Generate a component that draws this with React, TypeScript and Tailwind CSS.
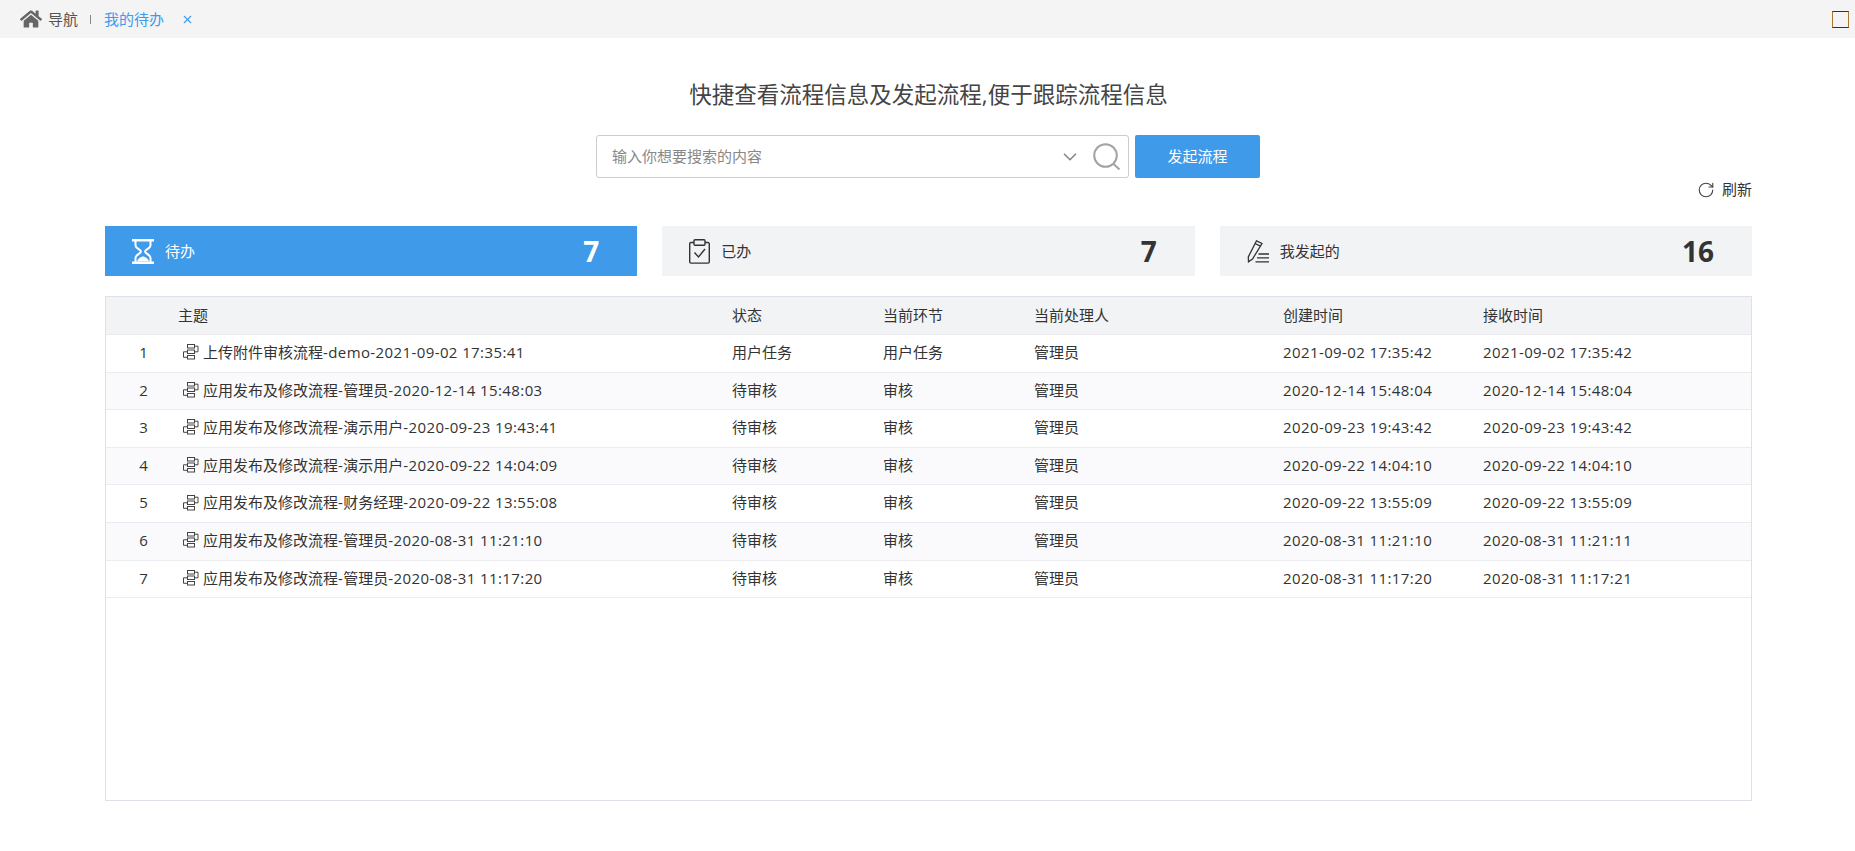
import { ChevronDown, RotateCw, X } from 'lucide-react'
import { FaHome } from 'react-icons/fa'

const rows = [
  ['上传附件审核流程-demo-2021-09-02 17:35:41', '用户任务', '用户任务', '管理员', '2021-09-02 17:35:42', '2021-09-02 17:35:42'],
  ['应用发布及修改流程-管理员-2020-12-14 15:48:03', '待审核', '审核', '管理员', '2020-12-14 15:48:04', '2020-12-14 15:48:04'],
  ['应用发布及修改流程-演示用户-2020-09-23 19:43:41', '待审核', '审核', '管理员', '2020-09-23 19:43:42', '2020-09-23 19:43:42'],
  ['应用发布及修改流程-演示用户-2020-09-22 14:04:09', '待审核', '审核', '管理员', '2020-09-22 14:04:10', '2020-09-22 14:04:10'],
  ['应用发布及修改流程-财务经理-2020-09-22 13:55:08', '待审核', '审核', '管理员', '2020-09-22 13:55:09', '2020-09-22 13:55:09'],
  ['应用发布及修改流程-管理员-2020-08-31 11:21:10', '待审核', '审核', '管理员', '2020-08-31 11:21:10', '2020-08-31 11:21:11'],
  ['应用发布及修改流程-管理员-2020-08-31 11:17:20', '待审核', '审核', '管理员', '2020-08-31 11:17:20', '2020-08-31 11:17:21'],
]

const cols = 'grid grid-cols-[72px_554px_151px_151px_249px_200px_1fr] items-center'

// latin runs sit a touch wider in the original font
function Mixed({ text }: { text: string }) {
  return (
    <span>
      {text.split(/([\x00-\x7f]+)/).map((part, i) =>
        i % 2 ? (
          <span key={i} className="tracking-[0.4px]">
            {part}
          </span>
        ) : (
          part
        )
      )}
    </span>
  )
}

function HourglassIcon() {
  return (
    <svg width="22" height="25" viewBox="0 0 22 25" fill="none" stroke="white" className="shrink-0">
      <path d="M0 1.300h22M0 23.700h22" strokeWidth="2.600" />
      <path d="M3.500 2v4.500c0 3 5.500 4 5.500 6s-5.500 3-5.500 6.500v4M18.500 2v4.500c0 3-5.500 4-5.500 6s5.500 3 5.500 6.500v4" strokeWidth="2" />
      <path d="M5 22.500c.5-2.500 4-5 6-5s5.500 2.500 6 5z" fill="white" stroke="none" />
    </svg>
  )
}

function ClipboardIcon() {
  return (
    <svg width="21" height="25" viewBox="0 0 21 25" fill="none" stroke="#333" strokeWidth="1.400" className="shrink-0">
      <path d="M5 3.500H2a1.300 1.300 0 0 0-1.300 1.300v18a1.300 1.300 0 0 0 1.300 1.300h17a1.300 1.300 0 0 0 1.300-1.300v-18A1.300 1.300 0 0 0 19 3.500h-3" />
      <rect x="5" y="0.700" width="11" height="5.500" rx="1" />
      <path d="M5.500 13.500l4 4.500 6.500-8" />
    </svg>
  )
}

function PencilListIcon() {
  return (
    <svg width="22" height="23" viewBox="0 0 22 23" fill="none" stroke="#333" strokeWidth="1.300" className="shrink-0">
      <path d="M9.500.8l5.500 2.700-9.500 15.500-4 2.800-.2-4.900z" />
      <path d="M8 3.500l5.500 2.700" />
      <path d="M11.500 14h10.500M10 17.900h12M8.500 21.800h13.500" />
    </svg>
  )
}

function ProcessIcon() {
  return (
    <svg width="17" height="16" viewBox="0 0 17 16" fill="none" stroke="#444" strokeWidth="1" className="shrink-0">
      <rect x="5.500" y="0.500" width="7" height="3.500" />
      <rect x="5.500" y="6" width="7" height="3.500" />
      <rect x="5.500" y="11.500" width="7" height="3.500" />
      <path d="M12.500 2.200h3.500v5.600h-3.500M5.500 7.800H1.500v5.500h4" />
    </svg>
  )
}

function SearchIcon() {
  return (
    <svg width="28" height="27" viewBox="0 0 28 27" fill="none" stroke="#a3a3a3" strokeWidth="2">
      <circle cx="12.500" cy="12.500" r="11.300" />
      <path d="M20.500 21l6 5.500" />
    </svg>
  )
}

function StatCard({
  active,
  icon,
  label,
  value,
}: {
  active?: boolean
  icon: React.ReactNode
  label: string
  value: number
}) {
  return (
    <div
      className={`flex h-[50px] items-center pl-[27px] pr-[38px] ${
        active ? 'bg-[#409aea] text-white' : 'bg-[#f2f3f5] text-[#333]'
      }`}
    >
      {icon}
      <span className="ml-[11px] text-[15px]">{label}</span>
      <span className="ml-auto text-[28px] font-bold">{value}</span>
    </div>
  )
}

export default function App() {
  return (
    <div className="min-h-screen bg-white text-[15px] text-[#333] font-['Open_Sans','Noto_Sans_CJK_SC',sans-serif]">
      {/* Tab bar */}
      <div className="flex h-[38px] items-center bg-[#f4f4f4] pl-5 pr-[6px]">
        <FaHome className="text-[22px] text-[#666]" />
        <span className="ml-[6px] text-[#555]">导航</span>
        <span className="ml-[12px] h-[9px] w-px bg-[#888]" />
        <span className="ml-[13px] text-[#409aea]">我的待办</span>
        <X className="ml-[17px] h-[13px] w-[13px] text-[#409aea]" />
        <div className="ml-auto h-[17px] w-[17px] border border-[#333] border-x-[#a8792f]" />
      </div>

      {/* Heading + search */}
      <h1 className="mt-[40px] pl-[2px] text-center text-[22.500px] leading-[34px] text-[#444]">
        快捷查看流程信息及发起流程,便于跟踪流程信息
      </h1>
      <div className="mt-[23px] flex justify-center gap-[6px] pl-px">
        <div className="flex h-[43px] w-[533px] items-center rounded-[3px] border border-[#ccc] pl-[15px] pr-[7px]">
          <input
            className="min-w-0 flex-1 bg-transparent outline-none placeholder:text-[#888]"
            placeholder="输入你想要搜索的内容"
          />
          <ChevronDown className="mr-[12px] h-[22px] w-[22px] text-[#888]" strokeWidth={1.800} />
          <SearchIcon />
        </div>
        <button className="h-[43px] w-[125px] rounded-[2px] bg-[#409aea] text-white">发起流程</button>
      </div>

      <div className="px-[103px]">
        <div className="flex h-[23px] items-center justify-end gap-[7px]">
          <RotateCw className="h-[18px] w-[18px] text-[#444]" strokeWidth={1.500} />
          <span>刷新</span>
        </div>

        <div className="ml-[2px] mt-[25px] grid grid-cols-3 gap-[25px]">
          <StatCard active icon={<HourglassIcon />} label="待办" value={7} />
          <StatCard icon={<ClipboardIcon />} label="已办" value={7} />
          <StatCard icon={<PencilListIcon />} label="我发起的" value={16} />
        </div>

        {/* List */}
        <div className="ml-[2px] mt-[20px] h-[505px] border border-[#e0e0ec]">
          <div className={`${cols} h-[38px] border-b border-[#ececf0] bg-[#f2f3f5]`}>
            <span />
            <span>主题</span>
            <span>状态</span>
            <span>当前环节</span>
            <span>当前处理人</span>
            <span>创建时间</span>
            <span>接收时间</span>
          </div>
          {rows.map((r, i) => (
            <div
              key={r[0]}
              className={`${cols} h-[37.600px] border-b border-[#ececf0] pb-[2px] ${i % 2 ? 'bg-[#fafafc]' : 'bg-white'}`}
            >
              <span className="pl-[3px] text-center">{i + 1}</span>
              <span className="flex items-center gap-[4px] pl-[4px]">
                <ProcessIcon />
                <Mixed text={r[0]} />
              </span>
              <span>{r[1]}</span>
              <span>{r[2]}</span>
              <span>{r[3]}</span>
              <Mixed text={r[4]} />
              <Mixed text={r[5]} />
            </div>
          ))}
        </div>
      </div>
    </div>
  )
}
